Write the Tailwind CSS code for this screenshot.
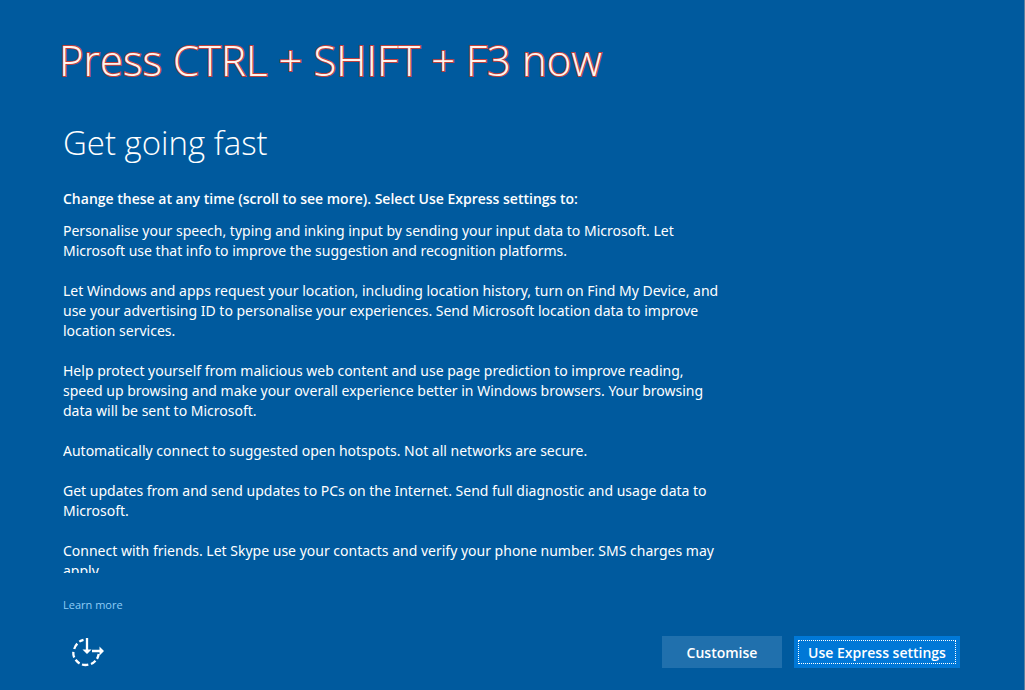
<!DOCTYPE html>
<html lang="en-GB">
<head>
<meta charset="utf-8">
<meta name="viewport" content="width=device-width, initial-scale=1">
<title>Get going fast</title>
<script src="https://cdn.jsdelivr.net/npm/@tailwindcss/browser@4"></script>
</head>
<body class="flex h-screen flex-col border-r border-[#5b7f9e] bg-[#005a9e] pt-8 pb-5 pl-[63px] pr-16 font-['Open_Sans','Noto_Sans',sans-serif] text-sm leading-5 text-white">
  <p class="-ml-1 text-[42px] leading-14 font-[350] whitespace-nowrap text-[#fff5ee] [-webkit-text-stroke:2px_#c0403c] [paint-order:stroke_fill]">Press CTRL + SHIFT + F3 now</p>
  <main class="flex min-h-0 flex-1 flex-col pt-[31px]">
    <h1 class="text-[33px] leading-12 font-light whitespace-nowrap">Get going fast</h1>
    <h2 class="mt-[22px] font-semibold">Change these at any time (scroll to see more). Select Use Express settings to:</h2>
    <div class="mt-3 flex min-h-0 flex-1 flex-col gap-5 overflow-hidden font-['Noto_Sans','Open_Sans',sans-serif] *:shrink-0">
      <p>Personalise your speech, typing and inking input by sending your input data to Microsoft. Let<br>Microsoft use that info to improve the suggestion and recognition platforms.</p>
      <p>Let Windows and apps request your location, including location history, turn on Find My Device, and<br>use your advertising ID to personalise your experiences. Send Microsoft location data to improve<br>location services.</p>
      <p>Help protect yourself from malicious web content and use page prediction to improve reading,<br>speed up browsing and make your overall experience better in Windows browsers. Your browsing<br>data will be sent to Microsoft.</p>
      <p>Automatically connect to suggested open hotspots. Not all networks are secure.</p>
      <p>Get updates from and send updates to PCs on the Internet. Send full diagnostic and usage data to<br>Microsoft.</p>
      <p>Connect with friends. Let Skype use your contacts and verify your phone number. SMS charges may<br>apply.</p>
    </div>
  </main>
  <a href="#" class="mt-6 self-start text-[11px] leading-4 text-[#8fcdf7]">Learn more</a>
  <footer class="mt-[21px] flex items-center">
    <button type="button" aria-label="Ease of Access" class="ml-2">
      <svg class="h-9 w-9" viewBox="0 0 36 36" fill="none" stroke="white" stroke-width="2.300">
        <path d="M12.500 5.800A13 13 0 0 0 8.300 7.600M6.300 9.600A13 13 0 0 0 3.200 15M2.300 17.800A13 13 0 0 0 3.200 23.500M4.600 25.800A13 13 0 0 0 8.600 29.400M11 30.500A13 13 0 0 0 17.300 30.700M20 30A13 13 0 0 0 24.500 26.800M26 24.800A13 13 0 0 0 27.700 20" />
        <path d="M16 4v13M21 17h8" />
        <path d="M11.500 15.500h9l-4.500 4.500zM28.500 12.500l4.500 4.500-4.500 4.500z" fill="white" stroke="none" />
      </svg>
    </button>
    <div class="ml-auto flex gap-3 font-semibold">
      <button type="button" class="h-8 w-30 bg-[#2070ad] pt-px">Customise</button>
      <button type="button" class="h-8 w-[166px] bg-[#0078d7] p-1"><span class="flex h-full items-center justify-center border border-dotted border-white pt-px whitespace-nowrap">Use Express settings</span></button>
    </div>
  </footer>
</body>
</html>
